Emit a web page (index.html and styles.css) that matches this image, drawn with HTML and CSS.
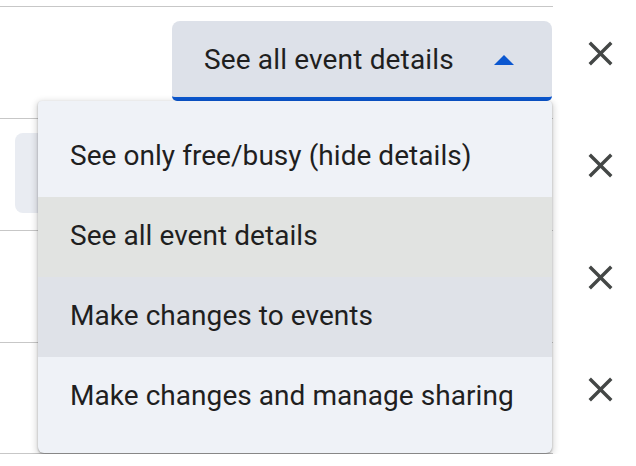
FILE: index.html
```html
<!DOCTYPE html>
<html lang="en">
  <head>
    <meta charset="UTF-8" />
    <meta name="viewport" content="width=device-width, initial-scale=1.0" />
    <title>Share with specific people</title>
    <link rel="stylesheet" href="styles.css">
  </head>
  <body>
    <!-- people with access -->
    <div class="list">
      <div class="row">
        <div class="cell">
          <div class="select open">
            <span class="value">See all event details</span>
            <svg class="arrow" width="20" height="10" viewBox="0 0 20 10"><polygon points="0,10 10,0 20,10" /></svg>

            <!-- open dropdown -->
            <ul class="menu">
              <li>See only free/busy (hide details)</li>
              <li class="selected">See all event details</li>
              <li class="hover">Make changes to events</li>
              <li>Make changes and manage sharing</li>
            </ul>
          </div>
        </div>
        <button class="remove" title="Remove">
          <svg width="41" height="41" viewBox="0 0 24 24"><path d="M19 6.41L17.59 5 12 10.59 6.41 5 5 6.41 10.59 12 5 17.59 6.41 19 12 13.41 17.59 19 19 17.59 13.41 12z" /></svg>
        </button>
      </div>

      <!-- these selects sit under the open menu -->
      <div class="row">
        <div class="cell">
          <div class="select wide"></div>
        </div>
        <button class="remove" title="Remove">
          <svg width="41" height="41" viewBox="0 0 24 24"><path d="M19 6.41L17.59 5 12 10.59 6.41 5 5 6.41 10.59 12 5 17.59 6.41 19 12 13.41 17.59 19 19 17.59 13.41 12z" /></svg>
        </button>
      </div>

      <div class="row">
        <div class="cell">
          <div class="select"></div>
        </div>
        <button class="remove" title="Remove">
          <svg width="41" height="41" viewBox="0 0 24 24"><path d="M19 6.41L17.59 5 12 10.59 6.41 5 5 6.41 10.59 12 5 17.59 6.41 19 12 13.41 17.59 19 19 17.59 13.41 12z" /></svg>
        </button>
      </div>

      <div class="row">
        <div class="cell">
          <div class="select"></div>
        </div>
        <button class="remove" title="Remove">
          <svg width="41" height="41" viewBox="0 0 24 24"><path d="M19 6.41L17.59 5 12 10.59 6.41 5 5 6.41 10.59 12 5 17.59 6.41 19 12 13.41 17.59 19 19 17.59 13.41 12z" /></svg>
        </button>
      </div>
    </div>
  </body>
</html>
```

FILE: styles.css
```css
body {
  margin: 0;
  background: #ffffff;
  font-family: Roboto, "Noto Sans", Arial, sans-serif;
  color: #1f1f1f;
  overflow: hidden;
}
.list {
  padding-top: 6px;
}
.row {
  display: flex;
  align-items: flex-start;
}
.cell {
  width: 553px;
  border-top: 1px solid #c7c7c7;
  padding: 14px 0 17px;
  display: flex;
  justify-content: flex-end;
  box-sizing: border-box;
  height: 112px;
}
.row:last-child .cell {
  border-bottom: 1px solid #c7c7c7;
}
.select {
  position: relative;
  width: 380px;
  height: 80px;
  margin-right: 1px;
  box-sizing: border-box;
  display: flex;
  align-items: center;
  padding-left: 32px;
  padding-bottom: 2px;
  background: #e9ecf2;
  border-radius: 8px;
  font-size: 28px;
  letter-spacing: 0.15px;
}
.select.wide {
  width: 537px;
}
.select.open {
  background: #dde1e9;
  border-bottom: 4px solid #0b57d0;
  border-radius: 8px 8px 5px 5px;
  padding-bottom: 0;
}
.arrow {
  margin-left: auto;
  margin-right: 38px;
  margin-top: 2px;
  fill: #0b57d0;
}
.menu {
  position: absolute;
  top: 80px;
  right: 0;
  width: 514px;
  margin: 0;
  padding: 16px 0;
  list-style: none;
  background: #eff2f7;
  border-radius: 4px 4px 6px 6px;
  box-shadow: 0 2px 6px 2px rgba(0, 0, 0, 0.15), 0 1px 2px rgba(0, 0, 0, 0.3);
  z-index: 10;
}
.menu li {
  height: 80px;
  display: flex;
  align-items: center;
  padding-left: 32px;
  padding-bottom: 3px;
  box-sizing: border-box;
  font-size: 28px;
  letter-spacing: 0.05px;
  color: #1f1f1f;
}
.menu li.selected {
  background: #e1e3e1;
}
.menu li.hover {
  background: #dfe2e8;
}
.remove {
  margin: 27px 0 0 27px;
  padding: 0;
  border: none;
  background: none;
  width: 41px;
  height: 41px;
  cursor: pointer;
}
.remove svg {
  display: block;
  fill: #444746;
}
```
